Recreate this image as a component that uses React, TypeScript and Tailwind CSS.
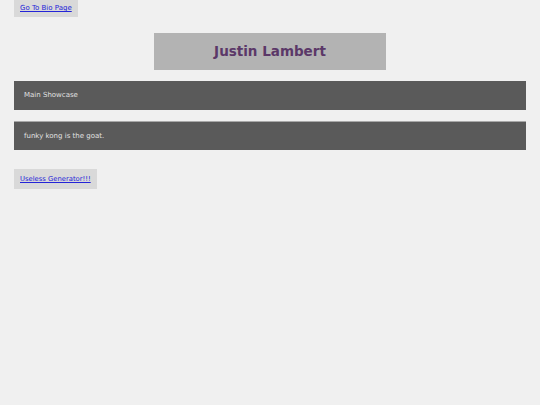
export default function App() {
  return (
    <div className="flex min-h-[405px] flex-col items-stretch bg-[#f0f0f0] px-[14px] font-['DejaVu_Sans',Verdana,sans-serif]">
      <a href="#" className="self-start bg-[#d9d9d9] px-[6px] pt-[4px] pb-[4px] text-[7px] leading-[9px] text-[#2424d8] underline">
        Go To Bio Page
      </a>
      <div className="mt-[16px] flex justify-center">
        <h1 className="flex h-[37px] w-[232px] items-center justify-center bg-[#b3b3b3] text-[13.5px] font-bold text-[#5b3868]">
          Justin Lambert
        </h1>
      </div>
      <div className="mt-[11px] flex h-[29px] items-center bg-[#5a5a5a] px-[10px] text-[7px] text-[#e0e0e0]">
        Main Showcase
      </div>
      <div className="mt-[11px] flex h-[29px] items-center border-t border-[#a8a8a8] bg-[#5a5a5a] px-[10px] text-[7px] text-[#e0e0e0]">
        funky kong is the goat.
      </div>
      <a href="#" className="mt-[19px] self-start bg-[#d9d9d9] px-[6px] py-[6px] text-[6.8px] leading-[8px] text-[#2424d8] underline">
        Useless Generator!!!
      </a>
    </div>
  );
}
